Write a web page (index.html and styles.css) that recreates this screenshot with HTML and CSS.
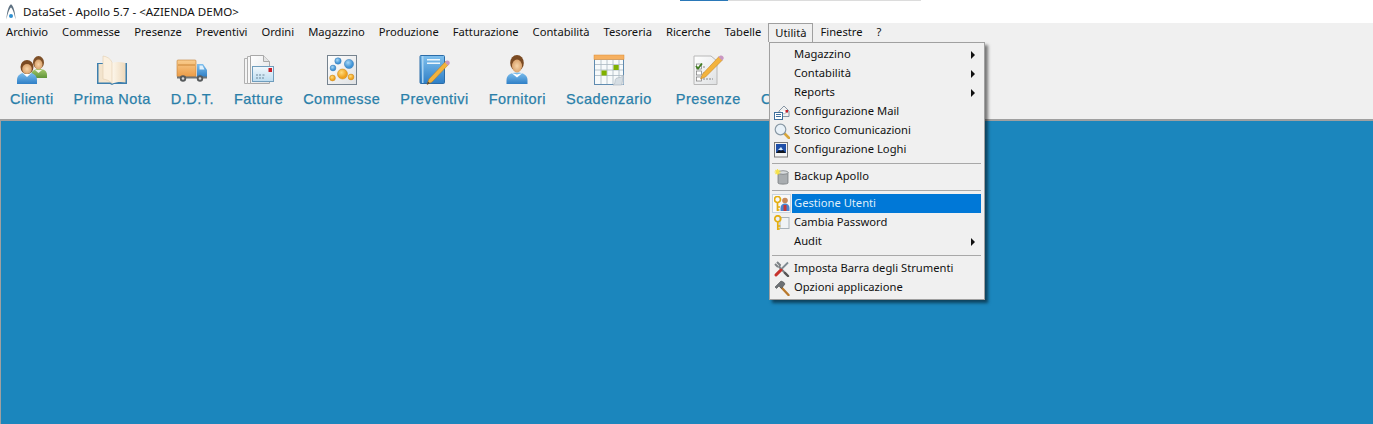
FILE: index.html
```html
<!DOCTYPE html>
<html lang="it">
<head>
<meta charset="utf-8">
<title>DataSet - Apollo 5.7</title>
<link rel="stylesheet" href="styles.css">
</head>
<body>
<svg class="defs" aria-hidden="true">
  <defs>
    <linearGradient id="gBlue" x1="0" y1="0" x2="0" y2="1"><stop offset="0" stop-color="#7fc0ee"/><stop offset="1" stop-color="#2f7fc6"/></linearGradient>
    <linearGradient id="gGreen" x1="0" y1="0" x2="0" y2="1"><stop offset="0" stop-color="#a5c86c"/><stop offset="1" stop-color="#5f9438"/></linearGradient>
    <linearGradient id="gOrange" x1="0" y1="0" x2="0" y2="1"><stop offset="0" stop-color="#f9cd8e"/><stop offset="1" stop-color="#eb9a45"/></linearGradient>
    <linearGradient id="gPage" x1="0" y1="0" x2="1" y2="0"><stop offset="0" stop-color="#fdf7ec"/><stop offset="1" stop-color="#eed9bb"/></linearGradient>
    <linearGradient id="gPaper" x1="0" y1="0" x2="1" y2="1"><stop offset="0" stop-color="#ffffff"/><stop offset="1" stop-color="#dfe1e3"/></linearGradient>
    <linearGradient id="gSky" x1="0" y1="0" x2="0" y2="1"><stop offset="0" stop-color="#f2f8fc"/><stop offset="1" stop-color="#bcdcf0"/></linearGradient>
    <radialGradient id="gFace"><stop offset="0" stop-color="#f7d4a8"/><stop offset="1" stop-color="#d9a26c"/></radialGradient>
    <radialGradient id="gBub" cx=".4" cy=".35"><stop offset="0" stop-color="#a8d8f6"/><stop offset="1" stop-color="#3f93d6"/></radialGradient>
    <radialGradient id="gBubO" cx=".4" cy=".35"><stop offset="0" stop-color="#ffdc7c"/><stop offset="1" stop-color="#f0a21e"/></radialGradient>
  </defs>
</svg>

<header class="titlebar">
  <span class="strip"><i class="strip-blue"></i><i class="strip-gray"></i></span>
  <svg class="logo" viewBox="0 0 10 16"><path d="M.4 15.500C.8 8 2.500 2 5 .3 7.500 2 9.200 8 9.600 15.500 8.200 9 6.500 4.500 5 3.500 3.500 4.500 1.800 9 .4 15.500z" fill="#5f7282"/><circle cx="5" cy="12" r="2" fill="#2f8fd0"/></svg>
  <span class="title-text">DataSet - Apollo 5.7 - &lt;AZIENDA DEMO&gt;</span>
</header>

<nav class="menubar">
  <span class="menu-top">Archivio</span>
  <span class="menu-top">Commesse</span>
  <span class="menu-top">Presenze</span>
  <span class="menu-top">Preventivi</span>
  <span class="menu-top">Ordini</span>
  <span class="menu-top">Magazzino</span>
  <span class="menu-top">Produzione</span>
  <span class="menu-top">Fatturazione</span>
  <span class="menu-top">Contabilità</span>
  <span class="menu-top">Tesoreria</span>
  <span class="menu-top">Ricerche</span>
  <span class="menu-top">Tabelle</span>
  <span class="menu-top is-open">Utilità</span>
  <span class="menu-top">Finestre</span>
  <span class="menu-top">?</span>
</nav>

<section class="toolbar">
  <div class="tool">
    <svg class="tool-icon" viewBox="0 0 32 32">
      <path d="M15 22c0-5 3-7 8-7s8 2 8 6v3H15z" fill="url(#gGreen)"/>
      <ellipse cx="22.500" cy="8.500" rx="5.500" ry="6.500" fill="#7d4f27"/>
      <ellipse cx="22.500" cy="10.500" rx="4" ry="5" fill="url(#gFace)"/>
      <path d="M19 16l3.500 3 3.500-3z" fill="#f4f4e8"/>
      <path d="M1 30v-4c0-5 4-7.500 10-7.500S21 21 21 26v4z" fill="url(#gBlue)"/>
      <path d="M6.500 19l4.500 4 4.500-4-4.500 1z" fill="#fff"/>
      <ellipse cx="11" cy="13" rx="6.500" ry="7" fill="#7a4a22"/>
      <ellipse cx="11" cy="15" rx="4.800" ry="5" fill="url(#gFace)"/>
    </svg>
    <span class="tool-label">Clienti</span>
  </div>
  <div class="tool">
    <svg class="tool-icon" viewBox="0 0 32 32">
      <path d="M1 9h30v21H18l-2 1-2-1H1z" fill="#3d7fae"/>
      <path d="M2.500 10H16v18.500H2.500z" fill="#f3e4cd"/>
      <path d="M16 9c4-1.500 9-1 13.500 0v19.500C25 27.500 20 28 16 29.500z" fill="url(#gPage)"/>
      <path d="M7 2c4 .5 8 3 9 6.500v21C14 26.500 10 25.500 7 25z" fill="#fbf0df" stroke="#e3cfae" stroke-width=".6"/>
    </svg>
    <span class="tool-label">Prima Nota</span>
  </div>
  <div class="tool">
    <svg class="tool-icon" viewBox="0 0 32 32">
      <rect x="1" y="6" width="19" height="17" rx="1" fill="url(#gOrange)" stroke="#c47f35" stroke-width=".6"/>
      <path d="M2 11h17" stroke="#c98437"/>
      <path d="M21 10h6l4 6v7H21z" fill="url(#gBlue)"/>
      <path d="M23.500 11.500h3l2 4h-5z" fill="#dff0fb"/>
      <rect x="1" y="22.500" width="30" height="2" fill="#6f7477"/>
      <circle cx="7" cy="24.500" r="3.200" fill="#565a5c"/><circle cx="7" cy="24.500" r="1.300" fill="#d8d8d8"/>
      <circle cx="24" cy="24.500" r="3.200" fill="#565a5c"/><circle cx="24" cy="24.500" r="1.300" fill="#d8d8d8"/>
    </svg>
    <span class="tool-label">D.D.T.</span>
  </div>
  <div class="tool">
    <svg class="tool-icon" viewBox="0 0 32 32">
      <path d="M1.500 4.500h13v25h-13z" fill="#f4f4f4" stroke="#b0b0b0"/>
      <path d="M4.500 2.500h11v27h-11z" fill="#f8f8f8" stroke="#b0b0b0"/>
      <path d="M7.500 1.500h13l6 6v22h-19z" fill="url(#gPaper)" stroke="#a8a8a8"/>
      <path d="M20.500 1.500v6h6" fill="#e4e4e4" stroke="#a8a8a8"/>
      <rect x="9.500" y="12.500" width="21" height="15" fill="url(#gSky)" stroke="#6f9dbd"/>
      <rect x="25.500" y="14" width="3.500" height="4" fill="#c8202a"/>
      <path d="M13 21h5M19.500 21h3M13 24h8" stroke="#6d8799" stroke-dasharray="2 1"/>
    </svg>
    <span class="tool-label">Fatture</span>
  </div>
  <div class="tool">
    <svg class="tool-icon" viewBox="0 0 32 32">
      <rect x="1.500" y="1.500" width="29" height="29" fill="url(#gPaper)" stroke="#76838f"/>
      <circle cx="12" cy="7" r="3.200" fill="url(#gBub)" stroke="#3a7db5" stroke-width=".5"/>
      <circle cx="23" cy="10" r="4.600" fill="url(#gBub)" stroke="#3a7db5" stroke-width=".5"/>
      <circle cx="7" cy="14" r="2.900" fill="url(#gBub)" stroke="#3a7db5" stroke-width=".5"/>
      <circle cx="16.500" cy="20" r="5" fill="url(#gBubO)" stroke="#c98416" stroke-width=".5"/>
      <circle cx="6.500" cy="24" r="2.900" fill="url(#gBubO)" stroke="#c98416" stroke-width=".5"/>
      <circle cx="25" cy="23" r="2.900" fill="url(#gBubO)" stroke="#c98416" stroke-width=".5"/>
    </svg>
    <span class="tool-label">Commesse</span>
  </div>
  <div class="tool">
    <svg class="tool-icon" viewBox="0 0 32 32">
      <rect x="2" y="1.500" width="24.500" height="28" rx="1" fill="url(#gBlue)" stroke="#2b6ca8"/>
      <rect x="4" y="2" width="1.500" height="27" fill="#a8d3f2"/>
      <rect x="9" y="5" width="13" height="1.500" fill="#eaf5fc"/>
      <rect x="9" y="8.500" width="13" height="1.500" fill="#eaf5fc"/>
      <path d="M28 7l3 3-17 18-5 2.500 2-5.500z" fill="#f3b33d" stroke="#b9791c" stroke-width=".5"/>
      <path d="M27 8.500l3 3 1.500-1.500c.6-1 .2-2.200-.6-3-.8-.7-2-.8-2.800-.1z" fill="#c998c2"/>
      <path d="M9 30.500l.8-3 2.200 1.800z" fill="#444"/>
    </svg>
    <span class="tool-label">Preventivi</span>
  </div>
  <div class="tool">
    <svg class="tool-icon" viewBox="0 0 32 32">
      <path d="M5.500 30v-4c0-5 4.500-7.500 10.500-7.500S26.500 21 26.500 26v4z" fill="url(#gBlue)"/>
      <path d="M10.500 19l5.500 4.500 5.500-4.500-5.500 1.500z" fill="#fff"/>
      <ellipse cx="16" cy="9" rx="6.800" ry="8" fill="#7a4a22"/>
      <ellipse cx="16" cy="12" rx="5" ry="6.500" fill="url(#gFace)"/>
    </svg>
    <span class="tool-label">Fornitori</span>
  </div>
  <div class="tool tool-wide">
    <svg class="tool-icon" viewBox="0 0 32 32">
      <rect x="1.500" y="5" width="29" height="25.500" fill="#f7fafb" stroke="#5f8bb0"/>
      <rect x="1" y="1" width="30" height="4.500" fill="#f6b060" stroke="#d98a34" stroke-width=".5"/>
      <path d="M2 10.500h28M2 16h28M2 21.500h28M8 6v24M14 6v24M20 6v24M26 6v24" stroke="#aab8c2" stroke-width=".8"/>
      <rect x="20.500" y="11" width="5.200" height="5" fill="#7fb000"/>
      <rect x="8.500" y="16.500" width="5.200" height="5" fill="#7fb000"/>
      <path d="M20 31l10.500-10v9.500z" fill="#f0f0f0"/>
      <path d="M20 31c3-1 1-5 3-6.500 2-1.500 5 0 7.500-3.500-1 4-1 7-2 10z" fill="#d5dde3" stroke="#9aa7b0" stroke-width=".5"/>
    </svg>
    <span class="tool-label">Scadenzario</span>
  </div>
  <div class="tool">
    <svg class="tool-icon" viewBox="0 0 32 32">
      <path d="M2 2h17l6 5v23.500H2z" fill="url(#gPaper)" stroke="#b8b8b8"/>
      <rect x="4.500" y="10" width="5" height="5" fill="#fff" stroke="#777" stroke-width=".7"/>
      <path d="M4 12l2 2.500 4-5" stroke="#3f7d1f" stroke-width="1.800" fill="none"/>
      <rect x="4.500" y="17" width="5" height="4" fill="#fff" stroke="#777" stroke-width=".7"/>
      <rect x="4.500" y="23" width="5" height="4" fill="#fff" stroke="#777" stroke-width=".7"/>
      <path d="M11 13h3M11 19h5M11 25h10" stroke="#888" stroke-dasharray="2 1"/>
      <path d="M27 2.500l3.500 3.500-17 17-5 2 2-5z" fill="#f3b33d" stroke="#b9791c" stroke-width=".5"/>
      <path d="M26.500 3l3.500 3.500 1.500-1.500c.5-1 .2-2-.6-2.800-.8-.8-1.900-1-2.900-.4z" fill="#c998c2"/>
    </svg>
    <span class="tool-label">Presenze</span>
  </div>
  <div class="tool tool-clipped">
    <span class="tool-label">C</span>
  </div>
</section>

<main class="desktop"></main>

<div class="dropdown">
  <div class="item"><span class="slot"></span><span class="label">Magazzino</span><i class="arrow"></i></div>
  <div class="item"><span class="slot"></span><span class="label">Contabilità</span><i class="arrow"></i></div>
  <div class="item"><span class="slot"></span><span class="label">Reports</span><i class="arrow"></i></div>
  <div class="item"><span class="slot">
    <svg class="mi" viewBox="0 0 16 16"><path d="M5 7l5-5 5 5v5.500H5z" fill="#f0f0f0" stroke="#6c7f92" stroke-width=".8"/><path d="M5 7l5 3 5-3" fill="#fff" stroke="#8a9aa8" stroke-width=".6"/><rect x="11.500" y="6" width="2.500" height="2.500" fill="#c8202a"/><rect x=".5" y="8.500" width="8" height="7" fill="#fff" stroke="#3f6f9c"/><path d="M2 10.500h5M2 12.500h5" stroke="#3f6f9c"/></svg>
  </span><span class="label">Configurazione Mail</span></div>
  <div class="item"><span class="slot">
    <svg class="mi" viewBox="0 0 16 16"><path d="M10 10l5 5" stroke="#d8a63c" stroke-width="2.600" stroke-linecap="round"/><circle cx="6.500" cy="6.500" r="5.300" fill="#e8f1f8" stroke="#8a9aa6" stroke-width="1.200"/></svg>
  </span><span class="label">Storico Comunicazioni</span></div>
  <div class="item"><span class="slot">
    <svg class="mi" viewBox="0 0 16 16"><rect x=".5" y=".5" width="13" height="14.500" fill="#f4f4f4" stroke="#7a7a7a"/><rect x="2" y="2" width="10" height="9" fill="#1f4fa8"/><path d="M2 11l3-3 2 1 2-1 3 3z" fill="#10161f"/><path d="M4 8h5L7 5z" fill="#d6ecfa"/></svg>
  </span><span class="label">Configurazione Loghi</span></div>
  <div class="sep"></div>
  <div class="item"><span class="slot">
    <svg class="mi" viewBox="0 0 16 16"><path d="M4 3h10v11c0 1.500-10 1.500-10 0z" fill="#a9adb0" stroke="#6e7275" stroke-width=".7"/><ellipse cx="9" cy="3.500" rx="5" ry="1.800" fill="#d8dbdd" stroke="#6e7275" stroke-width=".7"/><path d="M3.500 0v6M.5 3h6M1.500 1l4 4M5.500 1l-4 4" stroke="#f6e24a" stroke-width="1.100"/></svg>
  </span><span class="label">Backup Apollo</span></div>
  <div class="sep"></div>
  <div class="item is-active"><span class="slot slot-on">
    <svg class="mi" viewBox="0 0 16 16"><circle cx="3.500" cy="3.500" r="3" fill="none" stroke="#e3ae12" stroke-width="1.700"/><path d="M3.500 6v9M3.500 11h2.500M3.500 14h2" stroke="#e3ae12" stroke-width="1.700"/><circle cx="11" cy="4.500" r="2.800" fill="#c98a5a"/><path d="M6.500 15v-3c0-3 2-4.500 4.500-4.500s4.500 1.500 4.500 4.500v3z" fill="#4a84cf"/><path d="M9.500 9v6h3V9z" fill="#c83838"/></svg>
  </span><span class="label">Gestione Utenti</span></div>
  <div class="item"><span class="slot">
    <svg class="mi" viewBox="0 0 16 16"><rect x="6" y="2.500" width="9" height="11" fill="#f0f3f5" stroke="#a9b3ba"/><circle cx="3.800" cy="3.800" r="3" fill="none" stroke="#e3ae12" stroke-width="1.700"/><path d="M3.800 6v9M3.800 11h2.500M3.800 14h2" stroke="#e3ae12" stroke-width="1.700"/></svg>
  </span><span class="label">Cambia Password</span></div>
  <div class="item"><span class="slot"></span><span class="label">Audit</span><i class="arrow"></i></div>
  <div class="sep"></div>
  <div class="item"><span class="slot">
    <svg class="mi" viewBox="0 0 16 16"><path d="M3 1l3 3-.8 2L13 14" stroke="#7d8286" stroke-width="2" fill="none"/><path d="M1 3l3 3" stroke="#7d8286" stroke-width="2"/><path d="M14 1.500L2 13.500" stroke="#7f8b92" stroke-width="1.800"/><path d="M7 9l-5 5" stroke="#c8322c" stroke-width="3" stroke-linecap="round"/><path d="M11 12l3 3" stroke="#555" stroke-width="2.400" stroke-linecap="round"/></svg>
  </span><span class="label">Imposta Barra degli Strumenti</span></div>
  <div class="item"><span class="slot">
    <svg class="mi" viewBox="0 0 16 16"><path d="M7 7l7.500 8" stroke="#b9792c" stroke-width="2.400" stroke-linecap="round"/><path d="M1 7l6-6 2.500 1 1.500 2-3.500 4.500L5 6 2.500 8.500z" fill="#6c7074" stroke="#3d4042" stroke-width=".5"/></svg>
  </span><span class="label">Opzioni applicazione</span></div>
</div>
</body>
</html>
```
FILE: styles.css
```css
* { box-sizing: border-box; }
html, body { margin: 0; height: 100%; }
body {
  display: flex;
  flex-direction: column;
  height: 424px;
  overflow: hidden;
  background: #f0f0f0;
  font-family: "Noto Sans", "Open Sans", sans-serif;
  font-size: 11.2px;
  color: #111;
  position: relative;
}
.defs { position: absolute; width: 0; height: 0; }

.titlebar {
  position: relative;
  display: flex;
  align-items: center;
  height: 23px;
  flex: none;
  padding: 0 0 0 6px;
  background: #fff;
  font-size: 11.6px;
}
.strip { position: absolute; top: 0; left: 680px; display: flex; height: 1px; }
.strip-blue { width: 48px; background: #2a78b8; }
.strip-gray { width: 193px; background: #dcdcdc; }
.logo { width: 10px; height: 16px; margin-right: 7px; }

.menubar {
  display: flex;
  flex: none;
  height: 19px;
}
.menu-top {
  padding: 0 7px;
  line-height: 18px;
  white-space: nowrap;
}
.menu-top:first-child { margin-left: -1px; }
.is-open {
  border: 1px solid #a0a0a0;
  border-bottom: 0;
  padding: 0 5px 0 6px;
  margin-right: 1px;
}

.toolbar {
  display: flex;
  flex: none;
  gap: 20px;
  height: 77px;
  padding: 12px 0 0 10px;
  overflow: hidden;
}
.tool {
  display: flex;
  flex-direction: column;
  align-items: center;
  flex: none;
}
.tool-wide { margin-right: 4px; }
.tool-clipped { padding-top: 32px; }
.tool-icon { display: block; width: 32px; height: 32px; }
.tool-label {
  margin-top: 5px;
  font-family: "Liberation Sans", Arial, sans-serif;
  font-size: 14.5px;
  line-height: 16px;
  letter-spacing: .47px;
  -webkit-text-stroke: .25px #2a7fa9;
  color: #2a7fa9;
  white-space: nowrap;
}

.desktop {
  flex: 1;
  background: #1b86bd;
  border-top: 2px solid #a0a0a0;
  border-left: 1px solid #a0a0a0;
}

.dropdown {
  position: absolute;
  top: 42px;
  left: 769px;
  width: 216px;
  height: 258px;
  padding: 2px 3px 2px 2px;
  background: #f0f0f0;
  border: 1px solid #a0a0a0;
  box-shadow: 3px 3px 3px rgba(0, 0, 0, .5);
}
.item {
  display: flex;
  align-items: center;
  height: 19px;
}
.slot {
  display: flex;
  align-items: center;
  justify-content: center;
  flex: none;
  width: 19px;
  height: 19px;
  margin-right: 1px;
}
.slot-on { background: #f8f8f8; border: 1px solid #c8d4de; }
.mi { width: 16px; height: 16px; display: block; }
.label {
  flex: 1;
  height: 19px;
  padding-left: 2px;
  line-height: 18px;
  white-space: nowrap;
}
.is-active .label { background: #0078d7; color: #dfeefa; }
.arrow {
  flex: none;
  width: 0;
  height: 0;
  margin-right: 6px;
  border-left: 4px solid #111;
  border-top: 4px solid transparent;
  border-bottom: 4px solid transparent;
}
.sep {
  height: 8px;
  padding-top: 4px;
}
.sep::before {
  content: "";
  display: block;
  height: 1px;
  background: #a8a8a8;
}
```
